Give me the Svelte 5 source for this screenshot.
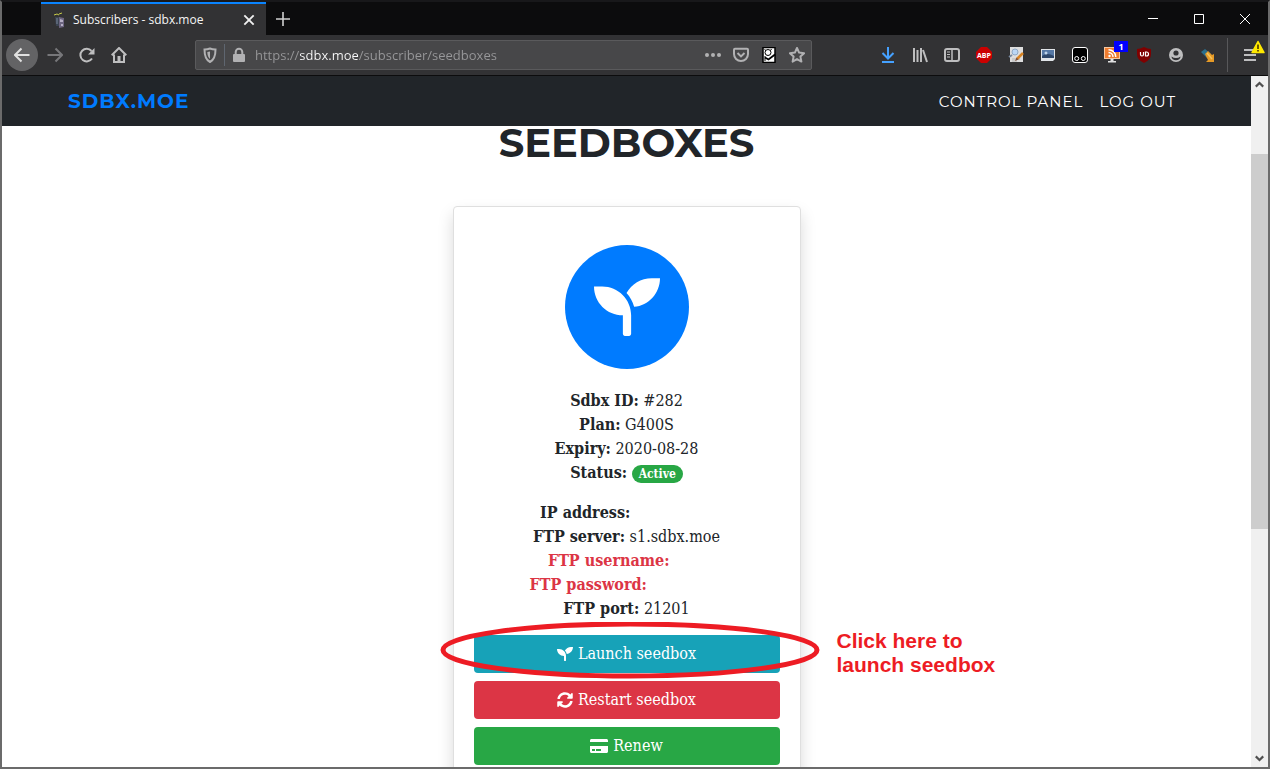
<script lang="ts">
  let url = 'https://sdbx.moe/subscriber/seedboxes';

  const summary = [
    { label: 'Sdbx ID:', value: '#282' },
    { label: 'Plan:', value: 'G400S' },
    { label: 'Expiry:', value: '2020-08-28' },
  ];

  // hidden = width of the blanked-out value in px
  const access = [
    { label: 'IP address:', value: '', hidden: 78, danger: false },
    { label: 'FTP server:', value: 's1.sdbx.moe', hidden: 0, danger: false },
    { label: 'FTP username:', value: '', hidden: 31, danger: true },
    { label: 'FTP password:', value: '', hidden: 72, danger: true },
    { label: 'FTP port:', value: '21201', hidden: 0, danger: false },
  ];

  const seedling =
    'M64 96H0c0 123.7 100.3 224 224 224v144c0 8.8 7.2 16 16 16h32c8.8 0 16-7.2 16-16V320C288 196.3 187.7 96 64 96zm384-64c-84.2 0-157.4 46.5-195.7 115.2 27.7 30.2 48.2 66.9 59 107.6C424 243.1 512 147.9 512 32h-64z';
</script>

<div class="window">
  <div class="tabbar">
    <div class="tab">
      <svg class="favicon" viewBox="0 0 16 16">
        <path d="M4 5h4v9H5z" fill="#3c4452" />
        <path d="M8 5l5 1v9l-5 1z" fill="#6c6580" />
        <path d="M9 7l3 1v2H9zM10 12h2v2h-2z" fill="#b4aec4" />
        <path d="M5 7h2M5 9h2M5 11h2" stroke="#79869a" />
        <path d="M3 3l3-1M6 2l2 1M8 2l3-1" stroke="#c8cc4a" />
      </svg>
      <span class="tab-title">Subscribers - sdbx.moe</span>
      <button class="tab-close" aria-label="Close tab">
        <svg viewBox="0 0 12 12"><path d="M2 2l8 8M10 2l-8 8" stroke="#f0f0f0" stroke-width="1.6" /></svg>
      </button>
    </div>
    <button class="new-tab" aria-label="New tab">
      <svg viewBox="0 0 16 16"><path d="M8 1v14M1 8h14" stroke="#d0d0d0" stroke-width="1.6" /></svg>
    </button>
    <div class="win-buttons">
      <button aria-label="Minimize"><svg viewBox="0 0 16 16"><path d="M3 7.5h10" stroke="#fff" /></svg></button>
      <button aria-label="Maximize"><svg viewBox="0 0 16 16"><path d="M3.5 3.5h9v9h-9z" fill="none" stroke="#fff" /></svg></button>
      <button aria-label="Close"><svg viewBox="0 0 16 16"><path d="M3 3l10 10M13 3L3 13" stroke="#fff" /></svg></button>
    </div>
  </div>

  <div class="toolbar">
    <div class="nav-buttons">
      <button class="tool back" aria-label="Back">
        <svg viewBox="0 0 16 16"><path d="M15.5 8H1M7.5 1.5L1 8l6.5 6.5" class="line" /></svg>
      </button>
      <button class="tool dim" aria-label="Forward">
        <svg viewBox="0 0 16 16"><path d="M0.5 8H15M8.5 1.5L15 8l-6.500 6.5" class="line" /></svg>
      </button>
      <button class="tool" aria-label="Reload">
        <svg viewBox="0 0 16 16"><path d="M13 11.5A6.3 6.3 0 1 1 12.5 4" class="line" /><path d="M15.5 1v6.5H9z" fill="currentColor" /></svg>
      </button>
      <button class="tool" aria-label="Home">
        <svg viewBox="0 0 16 16"><path d="M0.7 8.3L8 1l7.3 7.3M3 7.5V15h10V7.5" class="line" /><path d="M6.5 15V9h3v6z" fill="currentColor" /></svg>
      </button>
    </div>

    <div class="urlbar">
      <button class="tool small" aria-label="Tracking protection">
        <svg viewBox="0 0 16 16"><path d="M8 1.5c2 0.8 4 1 5.5 1C13.5 9 12 13 8 15 4 13 2.5 9 2.5 2.5 4 2.5 6 2.3 8 1.5z" class="line" /><path d="M8 4.5v7.5C6.3 10.5 5.4 8.500 5.3 5z" fill="currentColor" /></svg>
      </button>
      <span class="url-sep"></span>
      <button class="tool small" aria-label="Connection">
        <svg viewBox="0 0 16 16"><path d="M4.7 8V5a3.3 3.3 0 0 1 6.6 0v3" class="line" /><rect x="2" y="7" width="12" height="8" rx="1" fill="currentColor" /></svg>
      </button>
      <input type="text" bind:value={url} aria-label="Address" spellcheck="false" />
      <button class="tool small" aria-label="Page actions">
        <svg viewBox="0 0 16 16" fill="currentColor"><circle cx="2" cy="8" r="2" /><circle cx="8" cy="8" r="2" /><circle cx="14" cy="8" r="2" /></svg>
      </button>
      <button class="tool small" aria-label="Save to Pocket">
        <svg viewBox="0 0 16 16"><path d="M2 1.700h12q1 0 1 1V7A7 7 0 0 1 1 7V2.700q0-1 1-1z" class="line" /><path d="M4.5 6L8 9.4 11.5 6" class="line" /></svg>
      </button>
      <button class="tool small" aria-label="Search engine">
        <svg viewBox="0 0 16 16"><rect x="2" y="0.5" width="12" height="15" fill="#fff" stroke="#000" stroke-width="1.5" /><circle cx="7" cy="5.5" r="3" fill="none" stroke="#000" /><path d="M14 7.5L7.500 12.5 4 10.5" stroke="#000" stroke-width="1.8" fill="none" /><path d="M3.500 2.500l1.500 1M10.500 2L9.500 3.500M4 9v5" stroke="#000" /></svg>
      </button>
      <button class="tool small" aria-label="Bookmark this page">
        <svg viewBox="0 0 16 16"><path d="M8 1l2.1 4.6 5 0.6-3.7 3.4 1 5L8 12.1l-4.4 2.5 1-5L0.9 6.2l5-0.6z" class="line" stroke-linejoin="round" /></svg>
      </button>
    </div>

    <div class="extensions">
      <button class="tool" aria-label="Downloads">
        <svg viewBox="0 0 16 16" fill="none" stroke="#45a1ff" stroke-width="2"><path d="M8 0v11M2.5 6L8 11.5 13.5 6M2 15h12" /></svg>
      </button>
      <button class="tool" aria-label="Library">
        <svg viewBox="0 0 16 16"><path d="M2 1v14M5.500 3v12M9 1v14M11 3l4 12" class="line" /></svg>
      </button>
      <button class="tool" aria-label="Sidebars">
        <svg viewBox="0 0 16 16"><rect x="1" y="2" width="14" height="12" rx="2" class="line" /><path d="M8 2v12" class="line thin" /><path d="M3 5h3M3 7.5h3M3 10h3" stroke="currentColor" /></svg>
      </button>
      <button class="tool" aria-label="Adblock Plus">
        <svg viewBox="0 0 16 16"><path d="M5 0h6l5 5v6l-5 5H5l-5-5V5z" fill="#cb0000" /><text x="8" y="10.5" class="abp">ABP</text></svg>
      </button>
      <button class="tool" aria-label="Page inspector">
        <svg viewBox="0 0 16 16"><rect x="2" y="0" width="13" height="15" fill="#dedede" /><path d="M4 12h8M4 14h5" stroke="#b5b5b5" /><circle cx="7" cy="5" r="3" fill="#bcd7f5" stroke="#8fa9c6" /><path d="M1 10l3-2" stroke="#7a8ba2" stroke-width="2" /><path d="M15 6l-6 6" stroke="#d98423" stroke-width="2.5" /><path d="M8.500 10.500L7 14l3.500-1.500z" fill="#805038" /></svg>
      </button>
      <button class="tool" aria-label="Screenshot">
        <svg viewBox="0 0 16 16"><path d="M1 2h14v10l-2 2H1z" fill="#e0e4e8" /><rect x="2" y="3" width="12" height="8" fill="#5578a5" /><path d="M2 9q5-4 12 0v2H2z" fill="#2d4669" /><circle cx="6" cy="6" r="1.5" fill="#bed3ea" /></svg>
      </button>
      <button class="tool" aria-label="Tampermonkey">
        <svg viewBox="0 0 16 16"><rect x="0.5" y="0.5" width="15" height="15" rx="2.5" fill="#000" stroke="#fff" /><circle cx="4.7" cy="11.5" r="2" fill="none" stroke="#fff" /><circle cx="11.3" cy="11.5" r="2" fill="none" stroke="#fff" /></svg>
      </button>
      <button class="tool" aria-label="Feeds">
        <svg viewBox="0 0 16 16"><rect x="0.5" y="0.5" width="15" height="11" fill="#ef7d30" stroke="#f7c8a0" /><path d="M6.5 12h3v2H12v1.5H4V14h2.500z" fill="#e2e2e2" /><circle cx="5.5" cy="9" r="1.2" fill="#fff" /><path d="M4.5 5.5A4.5 4.5 0 0 1 9 10M4.5 2.7A7.3 7.3 0 0 1 11.8 10" fill="none" stroke="#fff" stroke-width="1.4" /></svg>
        <span class="badge">1</span>
      </button>
      <button class="tool" aria-label="uBlock">
        <svg viewBox="0 0 16 16"><path d="M8 0q4 2 7 2v5q0 6-7 9-7-3-7-9V2q3 0 7-2z" fill="#800000" /><path d="M4.500 5v2.500a1.500 1.500 0 0 0 3 0V5M9.500 5v4h1a2 2 0 0 0 0-4z" fill="none" stroke="#fff" stroke-width="1.2" /></svg>
      </button>
      <button class="tool" aria-label="Account">
        <svg viewBox="0 0 16 16"><circle cx="8" cy="8" r="7" fill="currentColor" /><circle cx="8" cy="6" r="2.6" fill="#323234" /><path d="M3.5 9.5a4.500 3.800 0 0 0 9 0q-2 1.500-4.5 1.500T3.5 9.5z" fill="#323234" /></svg>
      </button>
      <button class="tool" aria-label="Send to download manager">
        <svg viewBox="0 0 16 16"><path d="M1 5l4-3 6 5-4 4z" fill="#2b6f8c" /><path d="M5 7l3-3 4 4 2-1v8H6l2-2z" fill="#e69a26" /><path d="M7 6l5 6" stroke="#f5c35c" stroke-width="1.5" /></svg>
      </button>
      <span class="tool-sep"></span>
      <button class="tool" aria-label="Open menu">
        <svg viewBox="0 0 16 16"><path d="M2 3h12M2 8h12M2 13h12" class="line" /></svg>
        <svg class="warn" viewBox="0 0 14 13"><path d="M7 1l6 11H1z" fill="#ffe900" stroke="#ffe900" stroke-width="1.5" stroke-linejoin="round" /><path d="M7 4v4.500M7 9.5v1.500" stroke="#3e2800" stroke-width="1.5" /></svg>
      </button>
    </div>
  </div>

  <div class="viewport">
    <div class="page">
      <nav>
        <a class="brand" href="#home">SDBX.MOE</a>
        <div class="links">
          <a href="#panel">CONTROL PANEL</a>
          <a href="#logout">LOG OUT</a>
        </div>
      </nav>

      <main>
        <h1>SEEDBOXES</h1>
        <section class="card">
          <div class="logo">
            <svg viewBox="0 0 512 512"><path d={seedling} fill="#fff" /></svg>
          </div>
          <div class="info">
            {#each summary as row}
              <div><b>{row.label}</b> {row.value}</div>
            {/each}
            <div><b>Status:</b> <span class="pill">Active</span></div>
          </div>
          <div class="info">
            {#each access as row}
              <div class:danger={row.danger}>
                <b>{row.label}</b> {row.value}{#if row.hidden}<span class="hidden" style="width: {row.hidden}px"></span>{/if}
              </div>
            {/each}
          </div>
          <div class="actions">
            <div class="launch">
              <button class="btn info-btn">
                <svg class="icon" viewBox="0 0 512 512"><path d={seedling} /></svg>
                Launch seedbox
              </button>
              <svg class="ring" viewBox="0 0 380 57"><ellipse cx="190" cy="28" rx="187" ry="26" /></svg>
              <p class="note">Click here to<br />launch seedbox</p>
            </div>
            <button class="btn danger-btn">
              <svg class="icon" viewBox="0 0 512 512"><path d="M370.72 133.28C339.458 104.008 298.888 87.962 255.848 88c-77.458.068-144.328 53.178-162.791 126.85-1.344 5.363-6.122 9.15-11.651 9.15H24.103c-7.498 0-13.194-6.807-11.807-14.176C33.933 94.924 134.813 8 256 8c66.448 0 126.791 26.136 171.315 68.685L463.03 40.97C478.149 25.851 504 36.559 504 57.941V192c0 13.255-10.745 24-24 24H345.941c-21.382 0-32.09-25.851-16.971-40.971l41.75-41.749zM32 296h134.059c21.382 0 32.09 25.851 16.971 40.971l-41.75 41.75c31.262 29.273 71.835 45.319 114.876 45.28 77.418-.07 144.315-53.144 162.787-126.849 1.344-5.363 6.122-9.15 11.651-9.15h57.304c7.498 0 13.194 6.807 11.807 14.176C478.067 417.076 377.187 504 256 504c-66.448 0-126.791-26.136-171.315-68.685L48.97 471.03C33.851 486.149 8 475.441 8 454.059V320c0-13.255 10.745-24 24-24z" /></svg>
              Restart seedbox
            </button>
            <button class="btn success-btn">
              <svg class="icon wide" viewBox="0 0 576 512"><path d="M0 432c0 26.5 21.5 48 48 48h480c26.5 0 48-21.5 48-48V256H0v176zm192-68c0-6.6 5.4-12 12-12h136c6.6 0 12 5.4 12 12v40c0 6.6-5.4 12-12 12H204c-6.6 0-12-5.4-12-12v-40zm-128 0c0-6.6 5.4-12 12-12h72c6.6 0 12 5.4 12 12v40c0 6.6-5.4 12-12 12H76c-6.6 0-12-5.4-12-12v-40zM576 80v48H0V80c0-26.5 21.5-48 48-48h480c26.5 0 48 21.5 48 48z" /></svg>
              Renew
            </button>
          </div>
        </section>
      </main>
    </div>

    <div class="scrollbar">
      <svg viewBox="0 0 16 16"><path d="M4.5 10L8 6.5 11.5 10" /></svg>
      <div class="track"><div class="thumb"></div></div>
      <svg viewBox="0 0 16 16"><path d="M4.5 6L8 9.5 11.5 6" /></svg>
    </div>
  </div>
</div>

<style>
  :global(body) {
    margin: 0;
    overflow: hidden;
  }
  .window {
    display: flex;
    flex-direction: column;
    height: 100vh;
    box-sizing: border-box;
    border: 2px solid #6b6b6b;
    border-top-color: #18181a;
    background: #fff;
    font-family: 'Open Sans', 'Noto Sans', sans-serif;
  }
  button {
    display: flex;
    align-items: center;
    justify-content: center;
    padding: 0;
    border: 0;
    background: none;
    color: inherit;
    font: inherit;
    cursor: pointer;
  }

  /* tabs */
  .tabbar {
    display: flex;
    height: 33px;
    padding-left: 39px;
    background: #0c0c0d;
    color: #f5f5f5;
    flex-shrink: 0;
  }
  .tab {
    display: flex;
    align-items: center;
    gap: 6px;
    box-sizing: border-box;
    width: 225px;
    padding: 0 10px;
    border-top: 2px solid #0a84ff;
    background: #323234;
    font-size: 12px;
  }
  .favicon {
    width: 16px;
    height: 16px;
  }
  .tab-title {
    flex: 1;
  }
  .tab-close svg {
    width: 14px;
    height: 14px;
  }
  .new-tab {
    width: 34px;
  }
  .new-tab svg,
  .win-buttons svg {
    width: 16px;
    height: 16px;
  }
  .win-buttons {
    display: flex;
    margin-left: auto;
  }
  .win-buttons button {
    width: 46px;
  }

  /* toolbar */
  .toolbar {
    display: flex;
    align-items: center;
    gap: 60px;
    height: 40px;
    padding: 0 2px 0 4px;
    border-bottom: 1px solid #0c0c0d;
    background: #323234;
    color: #bebebf;
    flex-shrink: 0;
  }
  .nav-buttons,
  .extensions {
    display: flex;
    align-items: center;
  }
  .tool {
    position: relative;
    width: 32px;
    height: 32px;
  }
  .tool svg {
    width: 16px;
    height: 16px;
  }
  .tool.small {
    width: 28px;
    height: 28px;
  }
  .tool.back {
    margin-right: 1px;
    border-radius: 50%;
    background: #636365;
    color: #e0e0e0;
  }
  .tool.dim {
    color: #77777a;
  }
  .line {
    fill: none;
    stroke: currentColor;
    stroke-width: 2;
  }
  .line.thin {
    stroke-width: 1.5;
  }
  .urlbar {
    display: flex;
    align-items: center;
    flex: 1;
    height: 28px;
    border: 1px solid #5a5a5c;
    border-radius: 2px;
    background: #474749;
    color: #b1b1b3;
  }
  .url-sep {
    width: 1px;
    height: 22px;
    background: #5f6670;
  }
  .urlbar input {
    flex: 1;
    min-width: 0;
    padding: 0 0 0 2px;
    border: 0;
    outline: 0;
    font-family: 'Open Sans', 'Noto Sans', sans-serif;
    font-size: 13px;
    /* host part is brighter than scheme and path */
    background: linear-gradient(90deg, #98989a 46px, #f9f9fa 46px, #f9f9fa 105px, #98989a 105px);
    background-clip: text;
    color: transparent;
  }
  .abp {
    fill: #fff;
    font-size: 7px;
    font-weight: 700;
    text-anchor: middle;
  }
  .badge {
    position: absolute;
    top: 2px;
    right: 0;
    width: 14px;
    background: #00f;
    color: #fff;
    font-size: 9px;
    font-weight: 700;
    line-height: 11px;
  }
  .tool-sep {
    width: 1px;
    height: 34px;
    margin: 0 6px 0 3px;
    background: #58585a;
  }
  .tool .warn {
    position: absolute;
    top: 1px;
    right: 1px;
    width: 14px;
    height: 14px;
  }

  /* page */
  .viewport {
    display: flex;
    flex: 1;
    min-height: 0;
  }
  .page {
    flex: 1;
    overflow: hidden;
    color: #212529;
  }
  nav {
    display: flex;
    align-items: center;
    justify-content: space-between;
    height: 50px;
    padding: 0 75px 0 66px;
    background: #212529;
    font-family: Montserrat, Inter, sans-serif;
  }
  nav a {
    color: #fff;
    font-size: 15px;
    letter-spacing: 1px;
    text-decoration: none;
  }
  nav .brand {
    color: #007bff;
    font-size: 20px;
    font-weight: 700;
  }
  .links {
    display: flex;
    gap: 16px;
  }
  main {
    display: flex;
    flex-direction: column;
    align-items: center;
    font-family: 'Roboto Slab', 'DejaVu Serif Condensed', 'DejaVu Serif', serif;
    font-size: 16px;
    line-height: 24px;
  }
  h1 {
    margin: 0 0 46px;
    font-family: Montserrat, Inter, sans-serif;
    font-size: 40px;
    font-weight: 700;
    line-height: 34px;
  }
  .card {
    box-sizing: border-box;
    width: 348px;
    padding: 38px 20px 20px;
    border: 1px solid #dfdfdf;
    border-radius: 4px;
    background: #fff;
    box-shadow: 0 8px 16px rgba(0, 0, 0, 0.15);
    text-align: center;
  }
  .logo {
    display: flex;
    align-items: center;
    justify-content: center;
    width: 124px;
    height: 124px;
    margin: 0 auto 20px;
    border-radius: 50%;
    background: #007bff;
  }
  .logo svg {
    width: 66px;
    height: 66px;
  }
  .info {
    margin-bottom: 16px;
  }
  .info:nth-child(3) {
    margin-bottom: 14px;
  }
  .danger {
    color: #dc3545;
  }
  .hidden {
    display: inline-block;
  }
  .pill {
    display: inline-block;
    padding: 0 7px;
    border-radius: 10px;
    background: #28a745;
    color: #fff;
    font-size: 12px;
    font-weight: 700;
    line-height: 18px;
  }
  .actions {
    display: flex;
    flex-direction: column;
    gap: 8px;
  }
  .launch {
    position: relative;
  }
  .btn {
    gap: 5px;
    width: 100%;
    height: 38px;
    border-radius: 4px;
    color: #fff;
  }
  .icon {
    width: 16px;
    height: 16px;
    fill: currentColor;
  }
  .icon.wide {
    width: 18px;
  }
  .info-btn {
    background: #17a2b8;
  }
  .danger-btn {
    background: #dc3545;
  }
  .success-btn {
    background: #28a745;
  }
  .ring {
    position: absolute;
    top: -13px;
    left: -34px;
    width: 380px;
    height: 57px;
    fill: none;
    stroke: #ed1c24;
    stroke-width: 5;
    pointer-events: none;
  }
  .note {
    position: absolute;
    top: -6px;
    left: 363px;
    margin: 0;
    color: #ed1c24;
    font-family: 'Liberation Sans', Arial, sans-serif;
    font-size: 21px;
    font-weight: 700;
    text-align: left;
    white-space: nowrap;
  }

  .scrollbar {
    display: flex;
    flex-direction: column;
    width: 17px;
    background: #f0f0f0;
  }
  .scrollbar svg {
    height: 17px;
    fill: none;
    stroke: #505050;
    stroke-width: 2;
  }
  .track {
    flex: 1;
    padding-top: 61px;
  }
  .thumb {
    height: 63%;
    background: #cdcdcd;
  }
</style>
